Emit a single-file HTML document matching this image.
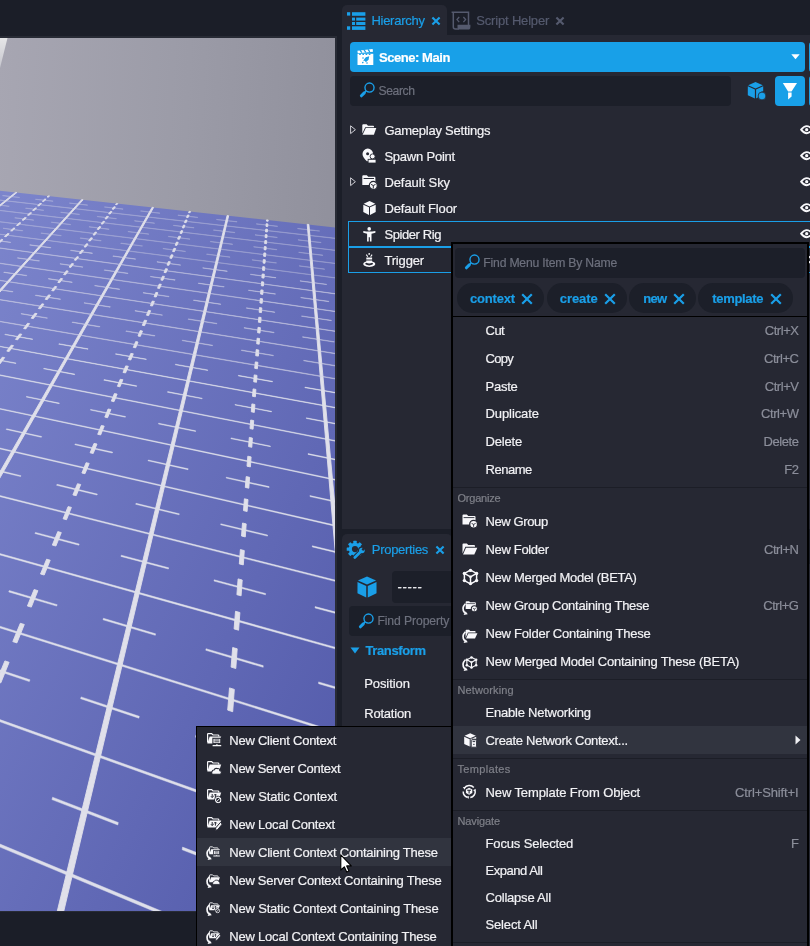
<!DOCTYPE html>
<html><head><meta charset="utf-8">
<style>
*{box-sizing:border-box;margin:0;padding:0}
html,body{width:810px;height:946px;overflow:hidden;background:#1b1e28}
body{position:relative;font-family:"Liberation Sans",sans-serif;font-size:13px;color:#f2f2f5}
.abs{position:absolute}
.t{position:absolute;white-space:nowrap;line-height:16px;height:16px;letter-spacing:-0.2px;margin-top:1px;-webkit-text-stroke:0.2px currentColor}
.blue{color:#1a9fe8}
.gray{color:#8b8e9a}
.lbl{color:#7f8089;font-size:11px}
.sep{position:absolute;left:453px;width:354px;height:1px;background:#1c1e27}
.b{font-weight:bold}
svg{position:absolute;overflow:visible}
.pill{height:30px;border-radius:15px;background:#1c1f29}
.tag{font-size:13px}
.ph{color:#6d707d;font-size:12.2px;letter-spacing:-0.1px;margin-top:0}
.mi{left:485.5px}
.sc{right:11.5px;color:#8b8e9a;letter-spacing:-0.45px}
.si{left:229.3px}
</style></head><body><div id="root" style="position:absolute;left:0;top:0;width:810px;height:946px;overflow:hidden;will-change:transform">
<!-- viewport -->
<div class="abs" id="vp" style="left:0;top:38px;width:335px;height:873px;overflow:hidden;background:linear-gradient(93deg,#a7a6b2 0%,#9b9ba7 50%,#8e8e9a 100%)">
<svg width="335" height="873" viewBox="0 38 335 873" style="left:0;top:0">
<defs><linearGradient id="fg" x1="0" y1="190" x2="720" y2="539.6" gradientUnits="userSpaceOnUse"><stop offset="0" stop-color="rgb(124,133,204)"/><stop offset="1" stop-color="rgb(68,75,158)"/></linearGradient></defs>
<linearGradient id="sl" x1="0" y1="38" x2="0" y2="70" gradientUnits="userSpaceOnUse"><stop offset="0" stop-color="#e6e6e8"/><stop offset="1" stop-color="#c4c4cc"/></linearGradient><path d="M0 38L7.500 38L0 68Z" fill="url(#sl)"/>
<path d="M-944.4 87.2L485.8 243.9L2338.0 2735.1L-1800.0 165.3Z" fill="url(#fg)"/>
<path d="M15.5 192.4L16.9 192.5L-600.8 692.2L-604.0 690.7ZM81.7 199.6L83.1 199.8L-433.2 772.6L-437.1 770.7ZM152.1 207.3L153.6 207.5L-224.4 872.6L-229.3 870.2ZM227.1 215.5L228.7 215.7L42.6 1000.5L36.2 997.5ZM307.2 224.3L308.9 224.5L396.4 1170.1L387.8 1165.9ZM48.1 195.9L49.5 196.1L48.4 197.1L47.0 197.0ZM44.7 199.1L46.1 199.2L43.8 201.4L42.4 201.3ZM40.0 203.4L41.5 203.6L39.1 205.9L37.6 205.7ZM35.2 208.0L36.6 208.1L34.1 210.5L32.6 210.3ZM30.1 212.7L31.6 212.9L29.0 215.3L27.5 215.1ZM24.8 217.6L26.3 217.8L23.6 220.3L22.1 220.1ZM19.3 222.7L20.8 222.9L18.0 225.5L16.5 225.4ZM13.6 228.1L15.1 228.2L12.2 231.0L10.6 230.8ZM7.6 233.6L9.2 233.8L6.1 236.7L4.5 236.5ZM1.3 239.4L2.9 239.7L-0.3 242.7L-1.9 242.5ZM116.4 203.4L117.8 203.6L117.0 204.7L115.5 204.5ZM113.9 206.8L115.4 206.9L113.7 209.3L112.1 209.1ZM110.4 211.4L111.9 211.6L110.2 214.0L108.6 213.8ZM106.8 216.3L108.4 216.5L106.5 219.0L105.0 218.8ZM103.1 221.3L104.7 221.5L102.7 224.1L101.1 223.9ZM99.2 226.6L100.8 226.8L98.8 229.5L97.2 229.3ZM95.1 232.1L96.7 232.3L94.7 235.1L93.0 234.9ZM90.8 237.8L92.5 238.0L90.3 241.0L88.6 240.8ZM86.4 243.8L88.1 244.0L85.8 247.1L84.1 246.9ZM81.7 250.1L83.5 250.3L81.1 253.6L79.3 253.3ZM76.9 256.7L78.6 256.9L76.1 260.3L74.3 260.1ZM71.7 263.6L73.6 263.8L70.9 267.4L69.1 267.1ZM66.4 270.8L68.2 271.1L65.5 274.8L63.6 274.6ZM60.7 278.4L62.6 278.7L59.7 282.7L57.8 282.4ZM54.8 286.4L56.7 286.7L53.7 290.9L51.7 290.6ZM48.5 294.9L50.5 295.2L47.3 299.6L45.2 299.3ZM41.9 303.8L43.9 304.2L40.5 308.8L38.4 308.5ZM34.9 313.3L37.0 313.6L33.4 318.6L31.2 318.2ZM27.5 323.3L29.6 323.6L25.8 328.9L23.6 328.5ZM19.6 333.9L21.8 334.3L17.7 339.8L15.5 339.4ZM11.2 345.2L13.5 345.6L9.2 351.5L6.8 351.1ZM2.3 357.2L4.7 357.6L0.0 363.9L-2.4 363.5ZM189.0 211.4L190.6 211.5L190.1 212.7L188.5 212.6ZM187.5 215.0L189.1 215.2L188.1 217.6L186.5 217.4ZM185.5 220.0L187.1 220.1L186.1 222.7L184.4 222.5ZM183.4 225.1L185.0 225.3L183.9 228.0L182.3 227.8ZM181.1 230.6L182.8 230.8L181.7 233.6L180.0 233.3ZM178.8 236.2L180.6 236.4L179.4 239.3L177.6 239.1ZM176.4 242.1L178.2 242.3L176.9 245.4L175.2 245.2ZM173.9 248.3L175.7 248.5L174.4 251.7L172.6 251.5ZM171.2 254.8L173.1 255.0L171.7 258.4L169.8 258.1ZM168.4 261.6L170.3 261.8L168.9 265.3L167.0 265.1ZM165.5 268.7L167.5 268.9L166.0 272.7L164.0 272.4ZM162.5 276.2L164.4 276.4L162.9 280.3L160.9 280.1ZM159.2 284.1L161.3 284.3L159.6 288.4L157.6 288.2ZM155.8 292.4L157.9 292.7L156.2 297.0L154.1 296.7ZM152.2 301.1L154.4 301.4L152.5 306.0L150.4 305.7ZM148.4 310.4L150.6 310.7L148.7 315.6L146.5 315.2ZM144.4 320.2L146.7 320.5L144.6 325.7L142.3 325.3ZM140.2 330.6L142.5 331.0L140.3 336.4L138.0 336.0ZM135.7 341.6L138.0 342.0L135.7 347.8L133.3 347.4ZM130.8 353.4L133.3 353.8L130.8 360.0L128.3 359.5ZM125.7 365.9L128.3 366.3L125.6 372.9L123.0 372.5ZM120.2 379.3L122.9 379.7L120.0 386.8L117.4 386.3ZM114.4 393.6L117.1 394.1L114.0 401.7L111.3 401.1ZM108.1 409.0L110.9 409.5L107.6 417.7L104.8 417.1ZM101.3 425.5L104.2 426.1L100.7 434.9L97.7 434.3ZM94.0 443.4L97.0 444.0L93.2 453.5L90.1 452.8ZM86.1 462.7L89.2 463.4L85.0 473.7L81.9 473.0ZM77.5 483.7L80.7 484.5L76.2 495.7L72.9 494.9ZM68.1 506.6L71.4 507.4L66.5 519.7L63.1 518.8ZM57.8 531.6L61.3 532.6L55.9 546.0L52.3 545.1ZM46.6 559.2L50.2 560.2L44.2 575.0L40.5 574.0ZM34.1 589.5L37.9 590.7L31.3 607.1L27.4 606.0ZM20.3 623.3L24.3 624.5L16.9 642.9L12.8 641.6ZM4.9 660.9L9.1 662.3L0.8 682.9L-3.5 681.4ZM266.5 219.9L268.2 220.0L268.1 221.3L266.4 221.1ZM266.2 223.7L267.9 223.9L267.7 226.6L266.0 226.4ZM265.8 229.1L267.5 229.3L267.3 232.0L265.5 231.8ZM265.3 234.6L267.1 234.8L266.9 237.7L265.1 237.5ZM264.9 240.5L266.7 240.7L266.5 243.7L264.6 243.5ZM264.4 246.5L266.2 246.8L266.0 249.9L264.1 249.7ZM263.9 252.9L265.8 253.1L265.5 256.5L263.6 256.2ZM263.3 259.6L265.3 259.8L265.0 263.3L263.1 263.1ZM262.8 266.6L264.8 266.9L264.5 270.5L262.5 270.2ZM262.2 274.0L264.3 274.2L264.0 278.1L261.9 277.8ZM261.6 281.7L263.7 282.0L263.4 286.0L261.3 285.7ZM260.9 289.9L263.1 290.2L262.8 294.4L260.6 294.1ZM260.3 298.5L262.5 298.8L262.2 303.3L259.9 302.9ZM259.5 307.6L261.8 307.9L261.5 312.6L259.2 312.3ZM258.8 317.2L261.1 317.5L260.8 322.5L258.4 322.2ZM258.0 327.3L260.4 327.7L260.0 333.1L257.6 332.7ZM257.1 338.2L259.6 338.5L259.2 344.2L256.7 343.8ZM256.2 349.6L258.8 350.1L258.4 356.1L255.7 355.7ZM255.3 361.9L257.9 362.3L257.4 368.8L254.7 368.3ZM254.2 374.9L257.0 375.4L256.5 382.3L253.7 381.8ZM253.1 388.9L255.9 389.4L255.4 396.8L252.5 396.3ZM251.9 403.9L254.9 404.5L254.3 412.4L251.3 411.8ZM250.7 420.0L253.7 420.6L253.1 429.2L250.0 428.6ZM249.3 437.4L252.4 438.1L251.8 447.3L248.6 446.6ZM247.8 456.2L251.1 456.9L250.4 466.9L247.0 466.2ZM246.2 476.6L249.6 477.3L248.8 488.2L245.3 487.4ZM244.4 498.8L248.0 499.6L247.1 511.5L243.5 510.6ZM242.5 523.0L246.2 523.9L245.3 536.9L241.5 536.0ZM240.4 549.6L244.3 550.6L243.3 564.9L239.3 563.9ZM238.1 578.9L242.2 580.0L241.1 595.8L236.9 594.7ZM235.5 611.3L239.9 612.5L238.6 630.2L234.1 628.9ZM232.7 647.5L237.2 648.8L235.8 668.5L231.1 667.1ZM229.5 687.9L234.3 689.4L232.7 711.7L227.7 710.1ZM225.9 733.6L231.0 735.3L229.2 760.5L223.9 758.7ZM221.8 785.5L227.2 787.4L225.2 816.3L219.5 814.2ZM217.1 845.1L222.9 847.3L220.5 880.6L214.4 878.2ZM211.6 914.0L217.9 916.6L215.1 955.6L208.5 952.8Z" fill="#e0e0ea" stroke="#e0e0ea" stroke-width="0.9" stroke-linejoin="round"/>
<path d="M5.1 334.2L32.8 339.1L32.4 339.5L4.7 334.6ZM59.0 343.7L88.1 348.8L87.9 349.3L58.7 344.2ZM115.7 353.7L146.4 359.1L146.2 359.6L115.5 354.2ZM175.4 364.2L207.8 369.9L207.7 370.5L175.3 364.8ZM238.4 375.3L272.5 381.3L272.5 381.9L238.3 375.9ZM304.9 387.1L341.0 393.4L341.1 394.0L304.9 387.7ZM-249.5 300.7L368.1 413.3L368.2 414.0L-250.1 301.0ZM-13.2 357.5L16.1 363.0L15.7 363.6L-13.6 358.0ZM43.9 368.3L74.8 374.1L74.5 374.7L43.5 368.8ZM104.1 379.6L136.7 385.8L136.5 386.4L103.8 380.2ZM167.7 391.6L202.2 398.2L202.1 398.8L167.5 392.3ZM235.0 404.4L271.6 411.3L271.5 411.9L234.9 405.0ZM306.3 417.8L345.2 425.2L345.3 425.9L306.4 418.5ZM-281.0 319.8L374.7 448.2L374.8 449.0L-281.7 320.3ZM26.6 396.4L59.4 403.1L59.1 403.7L26.2 397.0ZM90.7 409.4L125.5 416.5L125.3 417.2L90.4 410.1ZM158.7 423.2L195.7 430.8L195.6 431.5L158.5 424.0ZM231.0 437.9L270.4 446.0L270.4 446.7L230.9 438.7ZM308.0 453.6L350.1 462.2L350.2 463.0L308.0 454.4ZM-316.5 341.4L382.4 489.3L382.5 490.2L-317.3 341.9ZM6.6 428.8L41.7 436.5L41.3 437.3L6.2 429.5ZM75.2 443.9L112.6 452.1L112.3 453.0L74.8 444.7ZM148.3 460.0L188.2 468.8L188.0 469.7L148.0 460.8ZM226.3 477.2L269.1 486.6L269.1 487.6L226.2 478.1ZM309.9 495.6L355.8 505.7L355.9 506.7L310.0 496.6ZM-356.8 365.9L391.5 538.1L391.7 539.2L-357.7 366.5ZM-16.6 466.6L21.0 475.7L20.6 476.6L-17.2 467.5ZM57.0 484.3L97.4 494.1L97.0 495.0L56.6 485.3ZM136.0 503.3L179.3 513.8L179.1 514.8L135.7 504.3ZM220.8 523.8L267.5 535.0L267.5 536.1L220.7 524.8ZM312.3 545.8L362.7 557.9L362.8 559.1L312.3 546.9ZM-402.7 393.9L402.6 597.1L402.8 598.5L-403.8 394.5ZM35.4 532.4L79.2 544.0L78.8 545.2L34.9 533.5ZM121.3 555.2L168.7 567.8L168.4 569.0L120.9 556.4ZM214.2 579.8L265.6 593.5L265.5 594.8L214.0 581.1ZM315.1 606.6L371.0 621.4L371.2 622.9L315.1 608.0ZM-455.8 426.2L416.3 669.9L416.6 671.7L-457.0 426.9ZM9.3 590.5L57.2 604.7L56.7 606.1L8.7 591.9ZM103.4 618.3L155.6 633.8L155.3 635.3L103.0 619.8ZM206.0 648.7L263.2 665.6L263.2 667.3L205.8 650.3ZM318.6 681.9L381.5 700.5L381.7 702.4L318.6 683.7ZM-517.8 463.9L433.5 762.1L434.0 764.3L-519.2 464.8ZM-22.8 662.2L30.0 679.8L29.3 681.6L-23.6 663.8ZM81.1 696.9L139.3 716.3L138.9 718.2L80.6 698.7ZM195.8 735.2L260.2 756.7L260.2 758.8L195.5 737.2ZM323.0 777.6L394.8 801.6L395.1 804.0L323.1 779.9ZM-591.0 508.5L456.1 882.5L456.7 885.4L-592.7 509.5ZM52.6 797.2L118.3 822.5L117.8 825.0L51.9 799.6ZM182.5 847.1L256.4 875.5L256.3 878.4L182.2 849.8ZM328.8 903.3L412.4 935.4L412.9 938.7L329.0 906.4ZM-678.9 562.0L486.9 1046.3L487.6 1050.4L-681.0 563.2Z" fill="#dedfea" stroke="#dedfea" stroke-width="0.45" stroke-linejoin="round"/>
<path d="M-9.4 239.6L10.8 242.3L10.6 242.5L-9.7 239.8ZM29.9 244.8L50.9 247.6L50.7 247.9L29.6 245.1ZM70.7 250.2L92.5 253.1L92.3 253.4L70.5 250.5ZM113.0 255.9L135.7 258.9L135.5 259.2L112.8 256.2ZM157.0 261.7L180.6 264.9L180.5 265.2L156.9 262.0ZM202.8 267.8L227.3 271.1L227.2 271.4L202.7 268.1ZM250.4 274.2L275.9 277.6L275.9 277.9L250.4 274.5ZM300.0 280.8L326.6 284.3L326.7 284.6L300.0 281.1ZM-133.0 229.8L345.9 295.1L346.0 295.4L-133.4 230.0ZM17.6 257.8L39.5 260.8L39.2 261.1L17.3 258.1ZM60.1 263.7L82.9 266.9L82.7 267.2L59.9 264.0ZM104.4 269.9L128.1 273.2L127.9 273.6L104.2 270.2ZM150.4 276.4L175.2 279.8L175.0 280.2L150.3 276.7ZM198.4 283.1L224.2 286.7L224.1 287.0L198.3 283.4ZM248.5 290.1L275.4 293.8L275.4 294.2L248.5 290.4ZM300.8 297.4L328.9 301.3L328.9 301.7L300.8 297.8ZM-152.0 241.3L349.3 313.3L349.4 313.7L-152.5 241.6ZM4.0 272.1L26.9 275.4L26.6 275.8L3.7 272.4ZM48.5 278.6L72.3 282.1L72.1 282.5L48.2 278.9ZM94.8 285.4L119.7 289.1L119.5 289.5L94.6 285.8ZM143.2 292.6L169.1 296.4L169.0 296.8L143.0 292.9ZM193.6 300.0L220.8 304.0L220.7 304.4L193.5 300.4ZM246.4 307.8L274.8 312.0L274.8 312.4L246.4 308.2ZM301.6 315.9L331.4 320.3L331.4 320.7L301.6 316.3ZM-172.9 254.1L353.2 333.8L353.3 334.2L-173.4 254.3ZM-11.0 287.9L13.0 291.6L12.7 292.0L-11.3 288.2ZM35.6 295.1L60.6 299.0L60.3 299.4L35.3 295.5ZM84.2 302.7L110.4 306.8L110.1 307.2L84.0 303.1ZM135.0 310.6L162.4 314.9L162.3 315.3L134.9 311.0ZM188.3 318.9L217.0 323.4L216.9 323.8L188.2 319.3ZM244.1 327.6L274.1 332.3L274.1 332.8L244.0 328.1ZM302.6 336.7L334.2 341.7L334.2 342.1L302.6 337.2ZM-195.9 268.0L357.5 356.9L357.6 357.4L-196.4 268.3ZM21.2 313.5L47.5 317.9L47.2 318.3L20.9 313.9ZM72.3 322.0L99.9 326.5L99.7 327.0L72.1 322.4ZM126.0 330.9L154.9 335.6L154.7 336.1L125.8 331.3ZM182.3 340.2L212.6 345.2L212.5 345.7L182.1 340.6ZM241.4 350.0L273.4 355.3L273.4 355.8L241.4 350.5ZM303.7 360.3L337.4 365.8L337.4 366.4L303.7 360.8ZM-221.3 283.5L362.4 383.1L362.6 383.7L-221.8 283.8Z" fill="#d4d5e6" stroke="#d4d5e6" stroke-width="0.5" opacity="0.8"/>
<path d="M2.8 195.5L19.7 197.4L19.5 197.6L2.5 195.7ZM35.6 199.2L53.2 201.1L53.0 201.3L35.4 199.4ZM69.6 203.0L87.6 205.0L87.5 205.2L69.4 203.2ZM104.5 206.9L123.2 209.0L123.0 209.2L104.4 207.1ZM140.7 210.9L159.9 213.1L159.8 213.3L140.5 211.1ZM178.0 215.1L197.8 217.3L197.8 217.5L177.9 215.3ZM216.5 219.4L237.1 221.7L237.0 221.9L216.4 219.6ZM256.4 223.8L277.6 226.2L277.6 226.4L256.3 224.1ZM297.6 228.4L319.6 230.9L319.6 231.1L297.6 228.7ZM-70.9 192.0L335.3 238.2L335.3 238.5L-71.1 192.1ZM-8.3 204.1L9.3 206.2L9.0 206.4L-8.5 204.3ZM25.7 208.1L43.8 210.2L43.6 210.4L25.5 208.3ZM60.8 212.2L79.6 214.3L79.4 214.5L60.7 212.4ZM97.1 216.4L116.5 218.6L116.3 218.8L97.0 216.6ZM134.6 220.7L154.6 223.1L154.5 223.3L134.5 221.0ZM173.4 225.3L194.1 227.7L194.0 227.9L173.3 225.5ZM213.5 229.9L234.9 232.4L234.9 232.7L213.5 230.2ZM255.1 234.8L277.3 237.3L277.2 237.6L255.0 235.0ZM298.1 239.8L321.1 242.4L321.1 242.7L298.1 240.0ZM-84.6 200.3L337.5 250.5L337.6 250.7L-84.9 200.5ZM15.0 217.7L33.8 220.0L33.5 220.2L14.7 217.9ZM51.4 222.1L70.8 224.5L70.6 224.7L51.2 222.3ZM89.1 226.7L109.2 229.1L109.0 229.4L88.9 226.9ZM128.0 231.4L148.9 234.0L148.7 234.2L127.9 231.7ZM168.4 236.3L190.0 239.0L189.9 239.2L168.3 236.6ZM210.3 241.4L232.6 244.1L232.6 244.4L210.2 241.7ZM253.7 246.7L276.9 249.5L276.8 249.8L253.6 246.9ZM298.7 252.2L322.8 255.1L322.8 255.4L298.7 252.4ZM-99.4 209.3L340.1 263.9L340.1 264.2L-99.8 209.5ZM3.3 228.2L22.8 230.6L22.6 230.9L3.0 228.4ZM41.1 233.0L61.3 235.5L61.1 235.8L40.9 233.2ZM80.3 237.9L101.2 240.6L101.0 240.9L80.1 238.2ZM120.9 243.1L142.6 245.9L142.4 246.1L120.7 243.4ZM163.0 248.4L185.5 251.3L185.4 251.6L162.9 248.7ZM206.7 254.0L230.1 257.0L230.0 257.2L206.6 254.3ZM252.1 259.8L276.4 262.8L276.4 263.1L252.1 260.0ZM299.3 265.8L324.6 269.0L324.6 269.3L299.3 266.1ZM-115.5 219.1L342.8 278.7L342.9 279.0L-115.9 219.3Z" fill="#d4d5e6" stroke="#d4d5e6" stroke-width="0.55" opacity="0.5"/>
</svg>
</div>
<div class="abs" style="left:0;top:36px;width:337px;height:2px;background:#282b35"></div>
<div class="abs" style="left:335px;top:36px;width:2px;height:876px;background:#282b35"></div>
<div class="abs" style="left:0;top:911px;width:337px;height:1px;background:#282b35"></div>
<!-- hierarchy panel -->
<div class="abs" style="left:342px;top:5px;width:105px;height:40px;background:#262833;border-radius:5px 5px 0 0"></div>
<div class="abs" style="left:342px;top:35px;width:468px;height:494px;background:#262833"></div>
<!-- properties panel -->
<div class="abs" style="left:342px;top:534px;width:110px;height:40px;background:#262833;border-radius:5px 5px 0 0"></div>
<div class="abs" style="left:342px;top:564px;width:468px;height:382px;background:#262833"></div>
<svg style="left:347px;top:12px" width="19" height="18" viewBox="0 0 19 18"><g fill="#1a9fe8"><rect x="0" y="0.2" width="3.2" height="3.4"/><rect x="5" y="0.2" width="13.4" height="3.6"/><rect x="5" y="5.6" width="3" height="3"/><rect x="9.2" y="5.6" width="9.200" height="3"/><rect x="5" y="10" width="3" height="3"/><rect x="9.200" y="10" width="9.200" height="3"/><rect x="0" y="14.300" width="3.200" height="3.500"/><rect x="5" y="14.300" width="13.400" height="3.600"/></g></svg>
<div class="t blue" style="left:371.4px;top:12px;font-size:13px;letter-spacing:-0.26px">Hierarchy</div>
<svg style="left:431.1px;top:15.9px" width="10" height="10" viewBox="0 0 10 10"><path d="M1.4 1.4L8.6 8.6M8.6 1.4L1.4 8.6" stroke="#1a9fe8" stroke-width="2.1"/></svg>
<svg style="left:451px;top:11px" width="20" height="19" viewBox="0 0 20 19"><g fill="none" stroke="#555a6e" stroke-width="1.500"><path d="M0.600 1.300H17.500V14"/><path d="M2.300 1.300V16Q2.300 18 4.500 18H8"/><path d="M8.200 6L6 8.600L8.200 11.200M12.400 6L14.600 8.600L12.400 11.200" stroke-width="1.300"/></g><path d="M6.500 13.800H19.400V16Q19.400 18.600 17 18.600H8.500Q6.500 18.600 6.500 16.500Z" fill="#555a6e"/></svg>
<div class="t" style="left:476.3px;top:12px;font-size:13px;color:#555a6e;letter-spacing:-0.18px">Script Helper</div>
<svg style="left:555.1px;top:16px" width="10" height="10" viewBox="0 0 10 10"><path d="M1.4 1.4L8.6 8.6M8.6 1.4L1.4 8.6" stroke="#555a6e" stroke-width="2.1"/></svg>
<div class="abs" style="left:350px;top:42px;width:455px;height:30px;background:#18a0e8;border-radius:4px"></div>
<div class="abs" style="left:809px;top:42px;width:6px;height:30px;background:#18a0e8;border-radius:4px"></div>
<svg style="left:356.5px;top:49px" width="17" height="16" viewBox="0 0 17 16"><path d="M0.500 4.800H16.300V16H0.500Z" fill="#fff"/><path d="M0.400 1.800L15.600 0L16 2.700L0.800 4.300Z" fill="#fff"/><g stroke="#18a0e8" stroke-width="1.300"><path d="M3 1.200L4.800 3.700M7 0.800L8.800 3.300M11 0.400L12.800 2.900"/></g><g fill="#18a0e8"><rect x="2.200" y="4.800" width="1.600" height="1.200"/><rect x="5.400" y="4.800" width="1.600" height="1.200"/><rect x="8.600" y="4.800" width="1.600" height="1.200"/><rect x="11.800" y="4.800" width="1.600" height="1.200"/><path d="M12.200 7.300L11.600 10.800L8.800 13.200L7.800 11.800L6.200 12.200L7.200 10.200L8.800 8.200Z"/><circle cx="6" cy="9" r="0.800"/><circle cx="5.800" cy="13.600" r="0.800"/><circle cx="10" cy="14" r="0.800"/></g></svg>
<div class="t b" style="left:379px;top:49px;color:#fff;font-size:13px;letter-spacing:-0.450px">Scene: Main</div>
<svg style="left:790.5px;top:54px" width="9" height="6" viewBox="0 0 9 6"><path d="M0.300 0.300H8.700L4.500 5.300Z" fill="#fff"/></svg>
<div class="abs" style="left:350px;top:76px;width:381px;height:30px;background:#1c1f29;border-radius:4px"></div>
<svg style="left:359px;top:82px" width="16" height="16" viewBox="0 0 16 16"><circle cx="10.500" cy="5.600" r="4.550" fill="none" stroke="#1a9fe8" stroke-width="1.400"/><path d="M7.300 8.800L5 11.200" stroke="#1a9fe8" stroke-width="1.500"/><path d="M5.300 10.900L2.400 13.800" stroke="#1a9fe8" stroke-width="3" stroke-linecap="round"/></svg>
<div class="t ph" style="left:378.5px;top:83px;letter-spacing:-0.43px">Search</div>
<svg style="left:747px;top:81px" width="21" height="20" viewBox="0 0 21 20"><g fill="#1a9fe8"><path d="M8.500 1L15.800 4.200L8.500 7.400L1.200 4.200Z"/><path d="M0.800 5.300L7.900 8.400V17.600L0.800 14.200Z"/><path d="M9.100 8.400L16.200 5.300V10.200Q11.400 10.800 11 16.200L9.100 17.600Z"/><circle cx="15" cy="15" r="3.900" stroke="#262833" stroke-width="0.800"/></g></svg>
<div class="abs" style="left:775px;top:76px;width:30px;height:30px;background:#18a0e8;border-radius:4px"></div>
<div class="abs" style="left:809px;top:76px;width:6px;height:30px;background:#18a0e8;border-radius:4px"></div>
<svg style="left:782px;top:83px" width="16" height="17" viewBox="0 0 16 17"><path d="M0.800 0H15L9.500 8.600H6.100Z" fill="#fff"/><path d="M6.100 9.500H9.600V13.400L6.100 16.400Z" fill="#fff"/></svg>
<div class="abs" style="left:348px;top:221px;width:470px;height:26px;border:1px solid #1a9fe8"></div>
<div class="abs" style="left:348px;top:247px;width:470px;height:26px;border:1px solid #1a9fe8"></div>
<svg style="left:349.5px;top:124.5px" width="7" height="10" viewBox="0 0 7 10"><path d="M0.600 0.800L5.400 4.700L0.600 8.600Z" fill="none" stroke="#cfcfd6" stroke-width="1"/></svg>
<svg style="left:349.5px;top:176.5px" width="7" height="10" viewBox="0 0 7 10"><path d="M0.600 0.800L5.400 4.700L0.600 8.600Z" fill="none" stroke="#cfcfd6" stroke-width="1"/></svg>
<svg style="left:361.6px;top:124.2px" width="15" height="11" viewBox="0 0 15 11"><path d="M0.300 1.300Q0.300 0.300 1.300 0.300H4.600L6 1.800H11.200Q12 1.800 12 2.600V3.200H3.200L0.300 9.500Z" fill="#f8f8fb"/><path d="M3.800 4.100H14.300L11.900 10.700H0.600Z" fill="#f8f8fb"/></svg>
<div class="t" style="left:384.4px;top:122px;letter-spacing:-0.24px">Gameplay Settings</div>
<svg style="left:361.5px;top:148px" width="15" height="16" viewBox="0 0 15 16"><path d="M5.800 0.600A5.300 5.300 0 0 1 11.100 5.900Q11.100 8.500 8 11L5.200 13.400Q0.500 9 0.500 5.900A5.300 5.300 0 0 1 5.800 0.600Z" fill="#f8f8fb"/><circle cx="5.600" cy="5.700" r="1.500" fill="#262833"/><circle cx="10.600" cy="8.400" r="2.500" fill="#f8f8fb" stroke="#262833" stroke-width="0.900"/><rect x="6.100" y="11.300" width="7.900" height="3.700" fill="#f8f8fb" stroke="#262833" stroke-width="0.800"/></svg>
<div class="t" style="left:384.4px;top:148px;letter-spacing:-0.22px">Spawn Point</div>
<svg style="left:361.6px;top:174.8px" width="16" height="15" viewBox="0 0 16 15"><path d="M0.300 1.300Q0.300 0.300 1.300 0.300H4.800L6.200 1.800H12.400Q13.400 1.800 13.400 2.800V10H0.300Z" fill="#f8f8fb"/><path d="M1.600 3.500H12" stroke="#262833" stroke-width="1"/><circle cx="11.300" cy="10.400" r="4" fill="#f8f8fb" stroke="#262833" stroke-width="1.200"/><path d="M9.100 9.400L11.300 10.500L13.500 9.400M11.300 10.500V13.400" stroke="#262833" stroke-width="1" fill="none"/></svg>
<div class="t" style="left:384.4px;top:174px;letter-spacing:-0.08px">Default Sky</div>
<svg style="left:362.6px;top:201px" width="13" height="14" viewBox="0 0 13 14"><g fill="#f8f8fb"><path d="M6.500 0.100L12.300 2.700L6.500 5.400L0.700 2.700Z"/><path d="M0.300 3.700L6 6.300V13.900L0.300 11Z"/><path d="M7 6.300L12.700 3.700V11L7 13.900Z"/></g></svg>
<div class="t" style="left:384.4px;top:200px;letter-spacing:-0.14px">Default Floor</div>
<svg style="left:362.6px;top:226.6px" width="13" height="15" viewBox="0 0 13 15"><g fill="#f8f8fb"><circle cx="6.200" cy="1.900" r="1.800"/><path d="M0.300 3.900Q6.200 5 12.400 3.900V5.700L8.500 6.800V14.600H6.900V10.200H5.700V14.600H4.100V6.800L0.300 5.700Z"/></g></svg>
<div class="t" style="left:384.4px;top:226px;letter-spacing:-0.41px">Spider Rig</div>
<svg style="left:362.6px;top:253px" width="13" height="15" viewBox="0 0 13 15"><g fill="#f8f8fb"><circle cx="6.200" cy="0.900" r="0.900"/><path d="M3.300 1.600L4.800 3.700M9.100 1.600L7.600 3.700" stroke="#f8f8fb" stroke-width="1.100"/><path d="M3.300 4.600H9.100V6.600H3.300ZM3.300 7.600H9.100V9.800Q6.200 11 3.300 9.800Z"/><path d="M6.200 8A6 3 0 1 0 6.300 8ZM6.200 9.200A3.900 1.600 0 1 1 6.100 9.200Z" fill-rule="evenodd"/></g></svg>
<div class="t" style="left:384.4px;top:252px;letter-spacing:-0.16px">Trigger</div>
<svg style="left:800.3px;top:124.9px" width="14" height="10" viewBox="0 0 14 10"><path d="M1.100 4.650Q6.700 -2.400 12.300 4.650Q6.700 11.700 1.100 4.650Z" fill="#262833" stroke="#f8f8fb" stroke-width="1.900" stroke-linejoin="round"/><circle cx="6.700" cy="4.650" r="1.600" fill="#f8f8fb"/></svg>
<svg style="left:800.3px;top:150.9px" width="14" height="10" viewBox="0 0 14 10"><path d="M1.100 4.650Q6.700 -2.400 12.300 4.650Q6.700 11.700 1.100 4.650Z" fill="#262833" stroke="#f8f8fb" stroke-width="1.900" stroke-linejoin="round"/><circle cx="6.700" cy="4.650" r="1.600" fill="#f8f8fb"/></svg>
<svg style="left:800.3px;top:176.9px" width="14" height="10" viewBox="0 0 14 10"><path d="M1.100 4.650Q6.700 -2.400 12.300 4.650Q6.700 11.700 1.100 4.650Z" fill="#262833" stroke="#f8f8fb" stroke-width="1.900" stroke-linejoin="round"/><circle cx="6.700" cy="4.650" r="1.600" fill="#f8f8fb"/></svg>
<svg style="left:800.3px;top:202.9px" width="14" height="10" viewBox="0 0 14 10"><path d="M1.100 4.650Q6.700 -2.400 12.300 4.650Q6.700 11.700 1.100 4.650Z" fill="#262833" stroke="#f8f8fb" stroke-width="1.900" stroke-linejoin="round"/><circle cx="6.700" cy="4.650" r="1.600" fill="#f8f8fb"/></svg>
<svg style="left:800.3px;top:228.9px" width="14" height="10" viewBox="0 0 14 10"><path d="M1.100 4.650Q6.700 -2.400 12.300 4.650Q6.700 11.700 1.100 4.650Z" fill="#262833" stroke="#f8f8fb" stroke-width="1.900" stroke-linejoin="round"/><circle cx="6.700" cy="4.650" r="1.600" fill="#f8f8fb"/></svg>
<svg style="left:800.3px;top:254.9px" width="14" height="10" viewBox="0 0 14 10"><path d="M1.100 4.650Q6.700 -2.400 12.300 4.650Q6.700 11.700 1.100 4.650Z" fill="#262833" stroke="#f8f8fb" stroke-width="1.900" stroke-linejoin="round"/><circle cx="6.700" cy="4.650" r="1.600" fill="#f8f8fb"/></svg>
<!-- properties -->
<svg style="left:346px;top:540px" width="21" height="20" viewBox="0 0 21 20"><g fill="#1a9fe8"><circle cx="9" cy="9.1" r="6.300"/><rect x="7.30" y="0.80" width="3.400" height="3" rx="0.500" transform="rotate(0 9 9.1)"/><rect x="7.30" y="0.80" width="3.400" height="3" rx="0.500" transform="rotate(45 9 9.1)"/><rect x="7.30" y="0.80" width="3.400" height="3" rx="0.500" transform="rotate(90 9 9.1)"/><rect x="7.30" y="0.80" width="3.400" height="3" rx="0.500" transform="rotate(135 9 9.1)"/><rect x="7.30" y="0.80" width="3.400" height="3" rx="0.500" transform="rotate(180 9 9.1)"/><rect x="7.30" y="0.80" width="3.400" height="3" rx="0.500" transform="rotate(225 9 9.1)"/><rect x="7.30" y="0.80" width="3.400" height="3" rx="0.500" transform="rotate(270 9 9.1)"/><rect x="7.30" y="0.80" width="3.400" height="3" rx="0.500" transform="rotate(315 9 9.1)"/></g><circle cx="9" cy="9.1" r="3.100" fill="#262833"/><path d="M8.800 17.500L15.300 11" stroke="#262833" stroke-width="4.600" stroke-linecap="round"/><circle cx="15.900" cy="10.500" r="4" fill="#262833"/><path d="M8.800 17.500L15.300 11" stroke="#1a9fe8" stroke-width="2.700" stroke-linecap="round"/><circle cx="15.900" cy="10.500" r="2.800" fill="#1a9fe8"/><path d="M16.300 10.100L20.500 5.900" stroke="#262833" stroke-width="2.300"/></svg>
<div class="t blue" style="left:371.8px;top:541px;font-size:13px;letter-spacing:-0.3px">Properties</div>
<svg style="left:435.1px;top:545.2px" width="10" height="10" viewBox="0 0 10 10"><path d="M1.4 1.4L8.6 8.6M8.6 1.4L1.4 8.6" stroke="#1a9fe8" stroke-width="2.1"/></svg>
<svg style="left:357px;top:576px" width="20" height="22" viewBox="0 0 21 23"><g fill="#1a9fe8"><path d="M10.500 0.500L20 4.700L10.500 9L1 4.700Z"/><path d="M0.500 6.300L9.700 10.400V22.500L0.500 18Z"/><path d="M11.300 10.400L20.500 6.300V18L11.300 22.500Z"/></g></svg>
<div class="abs" style="left:392px;top:571px;width:70px;height:32px;background:#1c1f29;border-radius:4px"></div>
<div class="t" style="left:397.5px;top:578px;letter-spacing:0.7px">-----</div>
<div class="abs" style="left:349px;top:606px;width:110px;height:30px;background:#1c1f29;border-radius:4px"></div>
<svg style="left:358.2px;top:612.5px" width="16" height="16" viewBox="0 0 16 16"><circle cx="10.500" cy="5.600" r="4.550" fill="none" stroke="#1a9fe8" stroke-width="1.400"/><path d="M7.300 8.800L5 11.200" stroke="#1a9fe8" stroke-width="1.500"/><path d="M5.300 10.900L2.400 13.800" stroke="#1a9fe8" stroke-width="3" stroke-linecap="round"/></svg>
<div class="t ph" style="left:377.4px;top:613px">Find Property</div>
<svg style="left:350px;top:647px" width="10" height="7" viewBox="0 0 10 7"><path d="M0.500 0.500H9.500L5 6.500Z" fill="#1a9fe8"/></svg>
<div class="t b blue" style="left:365.5px;top:642px;font-size:13px;letter-spacing:-0.39px">Transform</div>
<div class="t" style="left:364.2px;top:675px;letter-spacing:-0.08px">Position</div>
<div class="t" style="left:364.2px;top:705px">Rotation</div>
<!-- context menu -->
<div class="abs" style="left:451px;top:242px;width:358px;height:712px;background:#262833;border:2px solid #000"></div>
<div class="abs" style="left:455px;top:248px;width:350px;height:30px;background:#1c1f29;border-radius:4px"></div>
<svg style="left:464.2px;top:254px" width="16" height="16" viewBox="0 0 16 16"><circle cx="10.500" cy="5.600" r="4.550" fill="none" stroke="#1a9fe8" stroke-width="1.400"/><path d="M7.300 8.800L5 11.200" stroke="#1a9fe8" stroke-width="1.500"/><path d="M5.300 10.900L2.400 13.800" stroke="#1a9fe8" stroke-width="3" stroke-linecap="round"/></svg>
<div class="t ph" style="left:483.3px;top:255px;letter-spacing:-0.2px">Find Menu Item By Name</div>
<div class="abs pill" style="left:457px;top:283px;width:87px"></div>
<div class="abs pill" style="left:546.5px;top:283px;width:80.5px"></div>
<div class="abs pill" style="left:629px;top:283px;width:67px"></div>
<div class="abs pill" style="left:698px;top:283px;width:95px"></div>
<div class="t b blue tag" style="left:470px;top:290px">context</div>
<div class="t b blue tag" style="left:559.8px;top:290px;letter-spacing:-0.1px">create</div>
<div class="t b blue tag" style="left:643.3px;top:290px;letter-spacing:-0.7px">new</div>
<div class="t b blue tag" style="left:712.2px;top:290px;letter-spacing:-0.3px">template</div>
<svg style="left:520.7px;top:292.5px" width="12" height="12" viewBox="0 0 12 12"><path d="M1.200 1.200L10.800 10.800M10.800 1.200L1.200 10.800" stroke="#1a9fe8" stroke-width="2.200"/></svg>
<svg style="left:603.8px;top:292.5px" width="12" height="12" viewBox="0 0 12 12"><path d="M1.200 1.200L10.800 10.800M10.800 1.200L1.200 10.800" stroke="#1a9fe8" stroke-width="2.200"/></svg>
<svg style="left:672.7px;top:292.5px" width="12" height="12" viewBox="0 0 12 12"><path d="M1.200 1.200L10.800 10.800M10.800 1.200L1.200 10.800" stroke="#1a9fe8" stroke-width="2.200"/></svg>
<svg style="left:769.6px;top:292.5px" width="12" height="12" viewBox="0 0 12 12"><path d="M1.200 1.200L10.800 10.800M10.800 1.200L1.200 10.800" stroke="#1a9fe8" stroke-width="2.200"/></svg>
<div class="sep" style="top:315.600px;background:#000;height:1.500px"></div>
<div class="t mi" style="top:322px;letter-spacing:-0.50px">Cut</div><div class="t sc" style="top:322px">Ctrl+X</div>
<div class="t mi" style="top:350px;letter-spacing:-0.70px">Copy</div><div class="t sc" style="top:350px">Ctrl+C</div>
<div class="t mi" style="top:378px;letter-spacing:-0.24px">Paste</div><div class="t sc" style="top:378px">Ctrl+V</div>
<div class="t mi" style="top:405px;letter-spacing:-0.09px">Duplicate</div><div class="t sc" style="top:405px">Ctrl+W</div>
<div class="t mi" style="top:433px;letter-spacing:-0.18px">Delete</div><div class="t sc" style="top:433px">Delete</div>
<div class="t mi" style="top:461px;letter-spacing:-0.47px">Rename</div><div class="t sc" style="top:461px">F2</div>
<div class="sep" style="top:487px"></div>
<div class="t lbl" style="left:457.4px;top:489px">Organize</div>
<div class="t mi" style="top:513px;letter-spacing:-0.39px">New Group</div>
<div class="t mi" style="top:541px;letter-spacing:-0.33px">New Folder</div><div class="t sc" style="top:541px">Ctrl+N</div>
<div class="t mi" style="top:569px;letter-spacing:-0.30px">New Merged Model (BETA)</div>
<div class="t mi" style="top:597px;letter-spacing:-0.28px">New Group Containing These</div><div class="t sc" style="top:597px">Ctrl+G</div>
<div class="t mi" style="top:625px;letter-spacing:-0.25px">New Folder Containing These</div>
<div class="t mi" style="top:653px;letter-spacing:-0.24px">New Merged Model Containing These (BETA)</div>
<div class="sep" style="top:679px"></div>
<div class="t lbl" style="left:457.4px;top:681px;letter-spacing:0.13px">Networking</div>
<div class="t mi" style="top:704px;letter-spacing:-0.22px">Enable Networking</div>
<div class="abs" style="left:453px;top:726px;width:354px;height:28px;background:#31343f"></div>
<div class="t mi" style="top:732px;letter-spacing:-0.29px">Create Network Context...</div>
<svg style="left:795px;top:735px" width="6" height="10" viewBox="0 0 6 10"><path d="M0.500 0.500L5.500 5L0.500 9.500Z" fill="#f0f0f4"/></svg>
<div class="sep" style="top:758px"></div>
<div class="t lbl" style="left:457.4px;top:760px;letter-spacing:0.35px">Templates</div>
<div class="t mi" style="top:784px;letter-spacing:-0.11px">New Template From Object</div><div class="t sc" style="top:784px;letter-spacing:-0.13px">Ctrl+Shift+I</div>
<div class="sep" style="top:810px"></div>
<div class="t lbl" style="left:457.4px;top:812px;letter-spacing:-0.1px">Navigate</div>
<div class="t mi" style="top:835px;letter-spacing:-0.14px">Focus Selected</div><div class="t sc" style="top:835px">F</div>
<div class="t mi" style="top:862px;letter-spacing:-0.45px">Expand All</div>
<div class="t mi" style="top:889px;letter-spacing:-0.21px">Collapse All</div>
<div class="t mi" style="top:916px;letter-spacing:-0.14px">Select All</div>
<div class="sep" style="top:942px"></div>
<!-- submenu -->
<div class="abs" style="left:196px;top:726px;width:255px;height:230px;background:#262833;border:1px solid #000;border-right:none"></div>
<div class="abs" style="left:197px;top:838px;width:254px;height:28px;background:#31343f"></div>
<div class="t si" style="top:732px;letter-spacing:-0.25px">New Client Context</div>
<div class="t si" style="top:760px;letter-spacing:-0.30px">New Server Context</div>
<div class="t si" style="top:788px;letter-spacing:-0.16px">New Static Context</div>
<div class="t si" style="top:816px;letter-spacing:-0.21px">New Local Context</div>
<div class="t si" style="top:844px;letter-spacing:-0.23px">New Client Context Containing These</div>
<div class="t si" style="top:872px;letter-spacing:-0.27px">New Server Context Containing These</div>
<div class="t si" style="top:900px;letter-spacing:-0.19px">New Static Context Containing These</div>
<div class="t si" style="top:928px;letter-spacing:-0.21px">New Local Context Containing These</div>
<!-- cursor -->
<svg style="left:340px;top:854px" width="13" height="20" viewBox="0 0 13 20"><path d="M0.800 0.900V16L4.300 12.800L6.700 17.900L9 16.900L6.700 11.900H11.300Z" fill="#fff" stroke="#000" stroke-width="1.100" stroke-linejoin="round"/></svg>
<svg style="left:462px;top:513.5px" width="16" height="15" viewBox="0 0 16 15"><path d="M0.5 1.5Q0.5 0.5 1.5 0.5H4.8L6.3 2H12.5Q13.5 2 13.5 3V10.5H0.5Z" fill="#f8f8fb"/><path d="M1.6 3.6H12.4" stroke="#262833" stroke-width="0.9"/><circle cx="11.6" cy="10.2" r="3.9" fill="#f8f8fb" stroke="#262833" stroke-width="1.3"/><path d="M9.6 9.4L11.6 10.4L13.6 9.4M11.6 10.4V12.8" stroke="#262833" stroke-width="0.9" fill="none"/></svg>
<svg style="left:462px;top:543px" width="16" height="12" viewBox="0 0 16 12"><path d="M0.5 1.5Q0.5 0.5 1.5 0.5H4.8L6.3 2H12Q13 2 13 3V3.8H3.4L0.5 10.5Z" fill="#f8f8fb"/><path d="M4 4.8H15.3L12.3 11.5H1Z" fill="#f8f8fb"/></svg>
<svg style="left:462.5px;top:569px" width="15" height="16" viewBox="0 0 15 16"><g fill="none" stroke="#f8f8fb" stroke-width="1.5"><path d="M7.5 1.2L13.6 4.4V11.6L7.5 14.8L1.4 11.6V4.4Z"/><path d="M1.4 4.4L7.5 7.8L13.6 4.4M7.5 7.8V14.8"/></g><g fill="#f8f8fb"><circle cx="7.5" cy="1.4" r="1.7"/><circle cx="13.6" cy="4.4" r="1.7"/><circle cx="13.6" cy="11.6" r="1.7"/><circle cx="7.5" cy="14.6" r="1.7"/><circle cx="1.4" cy="11.6" r="1.7"/><circle cx="1.4" cy="4.4" r="1.7"/><circle cx="7.5" cy="7.8" r="1.4"/></g></svg>
<svg style="left:461px;top:600.4px" width="17" height="16" viewBox="0 0 17 16"><path d="M4.400 3.800Q-0.300 8.400 3.900 13.200" fill="none" stroke="#f8f8fb" stroke-width="1.600"/><path d="M2.600 15.100L6.700 14.300L4.700 11.300Z" fill="#f8f8fb"/><g transform="translate(4.3 0.8) scale(0.78)"><path d="M0.5 1.5Q0.5 0.5 1.5 0.5H4.8L6.3 2H12.5Q13.5 2 13.5 3V10.5H0.5Z" fill="#f8f8fb"/><path d="M1.6 3.6H12.4" stroke="#262833" stroke-width="0.9"/><circle cx="11.6" cy="10.2" r="3.9" fill="#f8f8fb" stroke="#262833" stroke-width="1.3"/><path d="M9.6 9.4L11.6 10.4L13.6 9.4M11.6 10.4V12.8" stroke="#262833" stroke-width="0.9" fill="none"/></g></svg>
<svg style="left:461px;top:628.4px" width="17" height="16" viewBox="0 0 17 16"><path d="M4.400 3.800Q-0.300 8.400 3.900 13.200" fill="none" stroke="#f8f8fb" stroke-width="1.600"/><path d="M2.600 15.100L6.700 14.300L4.700 11.300Z" fill="#f8f8fb"/><g transform="translate(4.2 1.4) scale(0.8)"><path d="M0.5 1.5Q0.5 0.5 1.5 0.5H4.8L6.3 2H12Q13 2 13 3V3.8H3.4L0.5 10.5Z" fill="#f8f8fb"/><path d="M4 4.8H15.3L12.3 11.5H1Z" fill="#f8f8fb"/></g></svg>
<svg style="left:461px;top:656.4px" width="17" height="16" viewBox="0 0 17 16"><path d="M4.400 3.800Q-0.300 8.400 3.900 13.200" fill="none" stroke="#f8f8fb" stroke-width="1.600"/><path d="M2.600 15.100L6.700 14.300L4.700 11.300Z" fill="#f8f8fb"/><g transform="translate(4.8 0.4) scale(0.76)"><g fill="none" stroke="#f8f8fb" stroke-width="1.5"><path d="M7.5 1.2L13.6 4.4V11.6L7.5 14.8L1.4 11.6V4.4Z"/><path d="M1.4 4.4L7.5 7.8L13.6 4.4M7.5 7.8V14.8"/></g><g fill="#f8f8fb"><circle cx="7.5" cy="1.4" r="1.7"/><circle cx="13.6" cy="4.4" r="1.7"/><circle cx="13.6" cy="11.6" r="1.7"/><circle cx="7.5" cy="14.6" r="1.7"/><circle cx="1.4" cy="11.6" r="1.7"/><circle cx="1.4" cy="4.4" r="1.7"/><circle cx="7.5" cy="7.8" r="1.4"/></g></g></svg>
<svg style="left:463.7px;top:733px" width="14" height="15" viewBox="0 0 14 15"><g fill="#f8f8fb"><path d="M6.200 0.200L11.800 2.700L6.200 5.300L0.600 2.700Z"/><path d="M0.200 3.700L5.700 6.200V13.600L0.200 10.900Z"/><path d="M6.700 6.200L12.200 3.700V5.800H6.700Z"/><path d="M6.700 5.800H8.200V12.400L6.700 13.600Z"/><rect x="7.300" y="6.800" width="5.200" height="7.400" rx="0.500" stroke="#31343f" stroke-width="0.900"/></g><path d="M8.600 8.600H11.200" stroke="#31343f" stroke-width="1"/><rect x="9.300" y="10.800" width="1.200" height="1.200" fill="#31343f"/></svg>
<svg style="left:462.4px;top:784.4px" width="15" height="16" viewBox="0 0 15 16"><g fill="none" stroke="#f8f8fb"><path d="M2.300 4.200A6 6 0 0 1 11.800 3.600M13.100 6.400A6 6 0 0 1 8.300 13.600M5.200 13.300A6 6 0 0 1 1.200 7.600" stroke-width="1.500"/></g><path d="M0.800 3L3.600 3.300L2.600 5.800ZM13.800 4.800L13.400 7.600L11 6.200ZM6.400 15L4.400 12.600L7.200 12.200Z" fill="#f8f8fb"/><path d="M7.100 3.700L10.300 5.400V9L7.100 10.800L3.900 9V5.400Z" fill="#f8f8fb"/><path d="M5.200 6.200H9M7.100 6.200V9.400" stroke="#262833" stroke-width="1.100" fill="none"/></svg>
<svg style="left:206.6px;top:733px" width="16" height="14" viewBox="0 0 16 14"><path d="M0.600 9.500V1.300Q0.600 0.600 1.300 0.600H4.600L6 2H11Q11.800 2 11.800 2.800V3.400" fill="none" stroke="#f8f8fb" stroke-width="1.200"/><path d="M2.700 3.600H14.200L11.900 10.400H0.300Z" fill="#f8f8fb"/><rect x="5.900" y="5.300" width="7.900" height="5.300" fill="#f8f8fb" stroke="#262833" stroke-width="1.100"/><path d="M7.400 7H12.400M7.400 8.800H12.400" stroke="#262833" stroke-width="0.900"/><path d="M5.600 12.600H14.200" stroke="#f8f8fb" stroke-width="1.300"/><path d="M9.200 11.200H10.600V12.200H9.200Z" fill="#f8f8fb"/></svg>
<svg style="left:206.6px;top:761px" width="16" height="14" viewBox="0 0 16 14"><path d="M0.600 9.500V1.300Q0.600 0.600 1.300 0.600H4.600L6 2H11Q11.800 2 11.800 2.800V3.400" fill="none" stroke="#f8f8fb" stroke-width="1.200"/><path d="M2.700 3.600H14.200L11.900 10.400H0.300Z" fill="#f8f8fb"/><path d="M5.800 13.200Q3.800 12.800 5 10.800Q5.200 9 7 9Q8 6.800 10.200 7.600Q13 7.200 12.800 9.600Q15 10 14.200 12.200Q14 13.200 13 13.200Z" fill="#f8f8fb" stroke="#262833" stroke-width="1.100"/></svg>
<svg style="left:206.6px;top:789px" width="16" height="14" viewBox="0 0 16 14"><path d="M0.600 9.500V1.300Q0.600 0.600 1.300 0.600H4.600L6 2H11Q11.800 2 11.800 2.800V3.400" fill="none" stroke="#f8f8fb" stroke-width="1.200"/><path d="M2.700 3.600H14.200L11.900 10.400H0.300Z" fill="#f8f8fb"/><path d="M5.200 5V8.400M3.900 7.200L5.200 8.600L6.500 7.200M8.400 8.600V5.200M7.100 6.400L8.400 5L9.700 6.400" stroke="#262833" stroke-width="1" fill="none"/><circle cx="11.200" cy="11" r="2.700" fill="#262833" stroke="#f8f8fb" stroke-width="1.100"/><path d="M9.400 12.800L13 9.200" stroke="#f8f8fb" stroke-width="1"/><circle cx="11.200" cy="11" r="3.800" fill="none" stroke="#262833" stroke-width="0.800"/></svg>
<svg style="left:206.6px;top:817px" width="16" height="14" viewBox="0 0 16 14"><path d="M0.600 9.500V1.300Q0.600 0.600 1.300 0.600H4.600L6 2H11Q11.800 2 11.800 2.800V3.400" fill="none" stroke="#f8f8fb" stroke-width="1.200"/><path d="M2.700 3.600H14.200L11.900 10.400H0.300Z" fill="#f8f8fb"/><path d="M5.200 5V8.400M3.900 7.200L5.200 8.600L6.500 7.200M8.400 8.600V5.200M7.100 6.400L8.400 5L9.700 6.400" stroke="#262833" stroke-width="1" fill="none"/><path d="M8.200 13.400L8.800 10.800L13.400 5.400L15.300 7L10.800 12.500Z" fill="#f8f8fb" stroke="#262833" stroke-width="1"/></svg>
<svg style="left:204.6px;top:845.4px" width="17" height="16" viewBox="0 0 17 16"><path d="M4.400 3.800Q-0.300 8.400 3.900 13.200" fill="none" stroke="#f8f8fb" stroke-width="1.600"/><path d="M2.600 15.100L6.700 14.300L4.700 11.300Z" fill="#f8f8fb"/><g transform="translate(4.1 1.4) scale(0.76)"><path d="M0.600 9.500V1.300Q0.600 0.600 1.300 0.600H4.600L6 2H11Q11.800 2 11.800 2.800V3.400" fill="none" stroke="#f8f8fb" stroke-width="1.200"/><path d="M2.700 3.600H14.200L11.900 10.400H0.300Z" fill="#f8f8fb"/><rect x="5.900" y="5.300" width="7.900" height="5.300" fill="#f8f8fb" stroke="#31343f" stroke-width="1.100"/><path d="M7.400 7H12.400M7.400 8.800H12.400" stroke="#31343f" stroke-width="0.900"/><path d="M5.600 12.600H14.200" stroke="#f8f8fb" stroke-width="1.300"/><path d="M9.200 11.200H10.600V12.200H9.200Z" fill="#f8f8fb"/></g></svg>
<svg style="left:204.6px;top:873.4px" width="17" height="16" viewBox="0 0 17 16"><path d="M4.400 3.800Q-0.300 8.400 3.900 13.200" fill="none" stroke="#f8f8fb" stroke-width="1.600"/><path d="M2.600 15.100L6.700 14.300L4.700 11.300Z" fill="#f8f8fb"/><g transform="translate(4.1 1.4) scale(0.76)"><path d="M0.600 9.500V1.300Q0.600 0.600 1.300 0.600H4.600L6 2H11Q11.800 2 11.800 2.800V3.400" fill="none" stroke="#f8f8fb" stroke-width="1.200"/><path d="M2.700 3.600H14.200L11.900 10.400H0.300Z" fill="#f8f8fb"/><path d="M5.800 13.200Q3.800 12.800 5 10.800Q5.200 9 7 9Q8 6.800 10.200 7.600Q13 7.200 12.800 9.600Q15 10 14.200 12.200Q14 13.200 13 13.200Z" fill="#f8f8fb" stroke="#262833" stroke-width="1.100"/></g></svg>
<svg style="left:204.6px;top:901.4px" width="17" height="16" viewBox="0 0 17 16"><path d="M4.400 3.800Q-0.300 8.400 3.900 13.200" fill="none" stroke="#f8f8fb" stroke-width="1.600"/><path d="M2.600 15.100L6.700 14.300L4.700 11.300Z" fill="#f8f8fb"/><g transform="translate(4.1 1.4) scale(0.76)"><path d="M0.600 9.500V1.300Q0.600 0.600 1.300 0.600H4.600L6 2H11Q11.800 2 11.800 2.800V3.400" fill="none" stroke="#f8f8fb" stroke-width="1.200"/><path d="M2.700 3.600H14.200L11.900 10.400H0.300Z" fill="#f8f8fb"/><path d="M5.200 5V8.400M3.900 7.200L5.200 8.600L6.500 7.200M8.400 8.600V5.200M7.100 6.400L8.400 5L9.700 6.400" stroke="#262833" stroke-width="1" fill="none"/><circle cx="11.200" cy="11" r="2.700" fill="#262833" stroke="#f8f8fb" stroke-width="1.100"/><path d="M9.400 12.800L13 9.200" stroke="#f8f8fb" stroke-width="1"/><circle cx="11.200" cy="11" r="3.800" fill="none" stroke="#262833" stroke-width="0.800"/></g></svg>
<svg style="left:204.6px;top:929.4px" width="17" height="16" viewBox="0 0 17 16"><path d="M4.400 3.800Q-0.300 8.400 3.900 13.200" fill="none" stroke="#f8f8fb" stroke-width="1.600"/><path d="M2.600 15.100L6.700 14.300L4.700 11.300Z" fill="#f8f8fb"/><g transform="translate(4.1 1.4) scale(0.76)"><path d="M0.600 9.500V1.300Q0.600 0.600 1.300 0.600H4.600L6 2H11Q11.800 2 11.800 2.800V3.400" fill="none" stroke="#f8f8fb" stroke-width="1.200"/><path d="M2.700 3.600H14.200L11.900 10.400H0.300Z" fill="#f8f8fb"/><path d="M5.200 5V8.400M3.900 7.200L5.200 8.600L6.500 7.200M8.400 8.600V5.200M7.100 6.400L8.400 5L9.700 6.400" stroke="#262833" stroke-width="1" fill="none"/><path d="M8.200 13.400L8.800 10.800L13.400 5.400L15.300 7L10.800 12.500Z" fill="#f8f8fb" stroke="#262833" stroke-width="1"/></g></svg>

</div></body></html>
